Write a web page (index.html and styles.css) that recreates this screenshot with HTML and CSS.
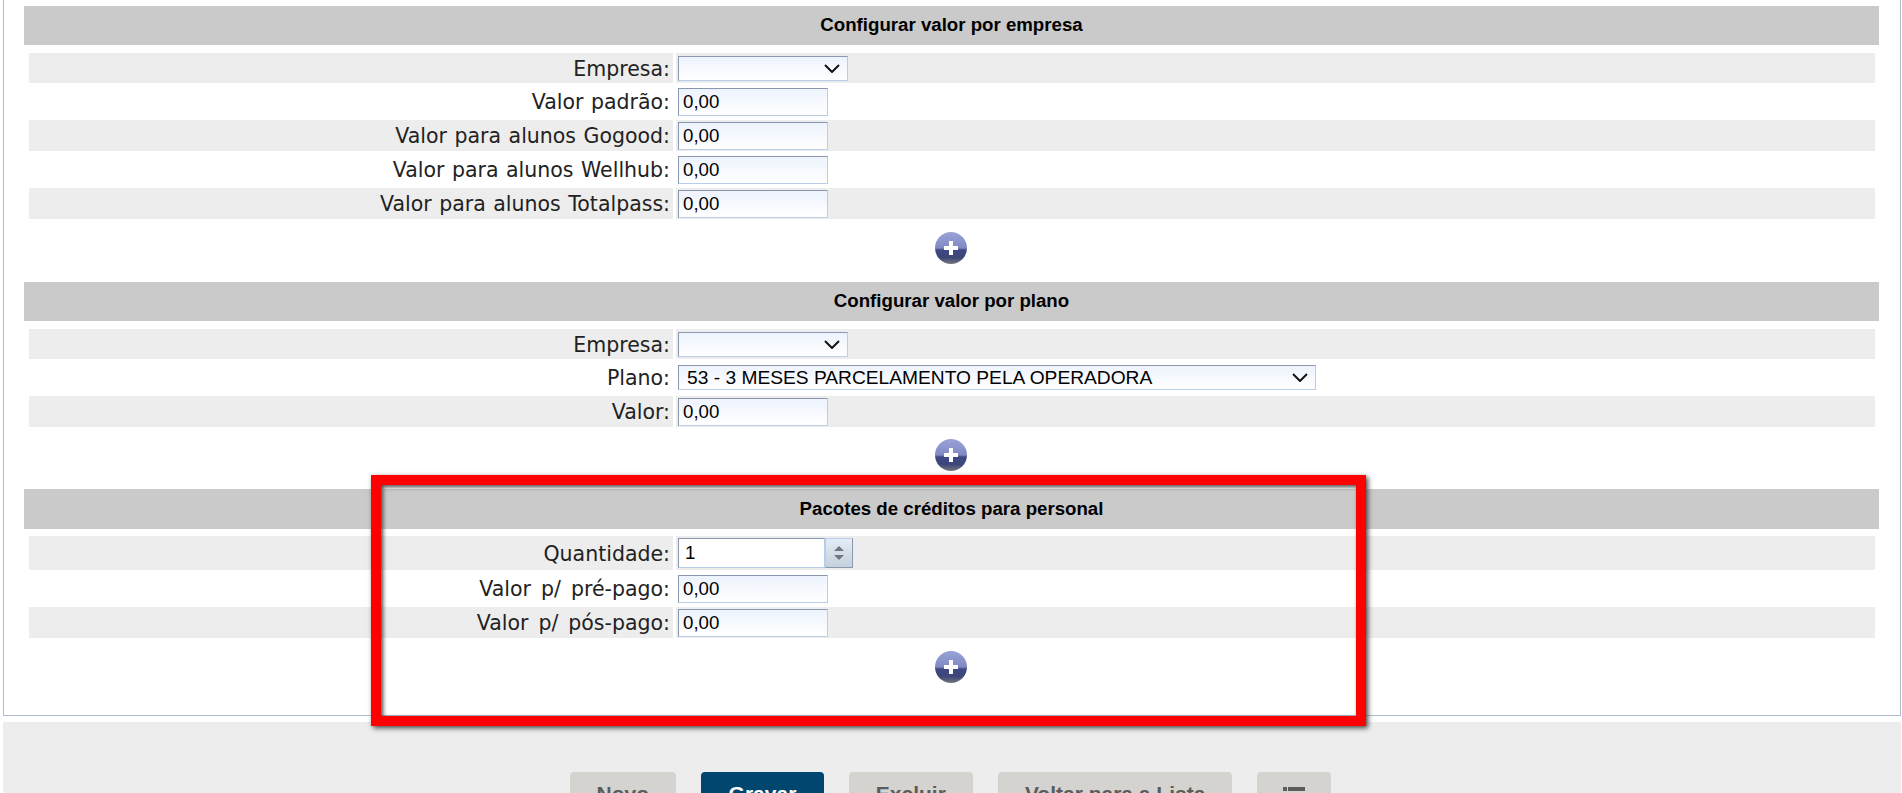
FILE: index.html
```html
<!doctype html>
<html lang="pt-BR">
<head>
    <meta charset="utf-8"/>
    <title>Cadastro de produto</title>
    <link rel="stylesheet" href="styles.css">
</head>

<body>
    <svg class="defs" width="0" height="0">
        <defs>
            <linearGradient id="addGrad" x1="0" y1="0" x2="0" y2="1">
                <stop offset="0" stop-color="#9aa3d8"/>
                <stop offset="0.5" stop-color="#8089c2"/>
                <stop offset="0.56" stop-color="#3e4884"/>
                <stop offset="0.8" stop-color="#3e4678"/>
                <stop offset="1" stop-color="#77777f"/>
            </linearGradient>
            <symbol id="add" viewBox="0 0 32 32">
                <circle cx="16" cy="16" r="16" fill="url(#addGrad)"/>
                <path d="M14 9h4v5h5v4h-5v5h-4v-5H9v-4h5z" fill="#fff"/>
            </symbol>
        </defs>
    </svg>

    <div class="panel">
        <!-- valor por empresa -->
        <div class="section">
            <h3 class="heading">Configurar valor por empresa</h3>
            <table class="form">
                <tr class="even short">
                    <td class="label">Empresa:</td>
                    <td class="field"><select class="combo"><option></option></select></td>
                </tr>
                <tr>
                    <td class="label">Valor padrão:</td>
                    <td class="field"><input class="money" type="text" value="0,00"/></td>
                </tr>
                <tr class="even">
                    <td class="label">Valor para alunos Gogood:</td>
                    <td class="field"><input class="money" type="text" value="0,00"/></td>
                </tr>
                <tr>
                    <td class="label">Valor para alunos Wellhub:</td>
                    <td class="field"><input class="money" type="text" value="0,00"/></td>
                </tr>
                <tr class="even">
                    <td class="label">Valor para alunos Totalpass:</td>
                    <td class="field"><input class="money" type="text" value="0,00"/></td>
                </tr>
            </table>
            <div class="add"><svg width="32" height="32"><use href="#add"/></svg></div>
        </div>

        <!-- valor por plano -->
        <div class="section">
            <h3 class="heading">Configurar valor por plano</h3>
            <table class="form">
                <tr class="even short">
                    <td class="label">Empresa:</td>
                    <td class="field"><select class="combo"><option></option></select></td>
                </tr>
                <tr>
                    <td class="label">Plano:</td>
                    <td class="field">
                        <select class="combo wide"><option>53 - 3 MESES PARCELAMENTO PELA OPERADORA</option></select>
                    </td>
                </tr>
                <tr class="even">
                    <td class="label">Valor:</td>
                    <td class="field"><input class="money" type="text" value="0,00"/></td>
                </tr>
            </table>
            <div class="add tight"><svg width="32" height="32"><use href="#add"/></svg></div>
        </div>

        <!-- pacotes -->
        <div class="section">
            <h3 class="heading tall">Pacotes de créditos para personal</h3>
            <table class="form">
                <tr class="even high">
                    <td class="label">Quantidade:</td>
                    <td class="field">
                        <span class="spinner">
                            <input class="spin-input" type="text" value="1"/>
                            <span class="spin-btn">
                                <svg width="12" height="20" viewBox="0 0 12 20">
                                    <path d="M6 3l5 5H1z" fill="#6f7680"/>
                                    <path d="M6 17l5-5H1z" fill="#6f7680"/>
                                </svg>
                            </span>
                        </span>
                    </td>
                </tr>
                <tr>
                    <td class="label spaced">Valor p/ pré-pago:</td>
                    <td class="field"><input class="money" type="text" value="0,00"/></td>
                </tr>
                <tr class="even">
                    <td class="label spaced">Valor p/ pós-pago:</td>
                    <td class="field"><input class="money" type="text" value="0,00"/></td>
                </tr>
            </table>
            <div class="add"><svg width="32" height="32"><use href="#add"/></svg></div>
        </div>
    </div>

    <div class="footer">
        <a class="btn">Novo</a>
        <a class="btn primary">Gravar</a>
        <a class="btn">Excluir</a>
        <a class="btn">Voltar para a Lista</a>
        <a class="btn icon">
            <svg width="22" height="18" viewBox="0 0 22 18">
                <path d="M0 0h4v4H0zM5 0h17v4H5zM0 6h4v4H0zM5 6h17v4H5zM0 12h4v4H0zM5 12h17v4H5z" fill="#5c5c5c"/>
            </svg>
        </a>
    </div>

    <div class="mark"></div>
</body>
</html>
```

FILE: styles.css
```css
* {
    box-sizing: border-box;
}

html, body {
    margin: 0;
    padding: 0;
    height: 793px;
    overflow: hidden;
    background: #fff;
}

body {
    position: relative;
    padding: 0 1px 0 3px;
}

.defs {
    position: absolute;
}

.panel {
    height: 716px;
    padding: 6px 21px 0 20px;
    border: 1px solid #aebccb;
    border-top: 0;
}

.section {
    margin-bottom: 18px;
}

.heading {
    margin: 0 0 5px;
    height: 39px;
    background: #cacaca;
    color: #000;
    font: bold 18.67px/37px "Liberation Sans", Arial, sans-serif;
    text-align: center;
}

.heading.tall {
    height: 40px;
    line-height: 39px;
    margin-bottom: 4px;
}

.form {
    width: 100%;
    border-collapse: separate;
    border-spacing: 3px;
    padding: 0 1px 0 2px;
    margin: 0;
}

.form td {
    height: 31px;
    padding: 0;
}

.form tr.short td {
    height: 30px;
}

.form tr.high td {
    height: 34px;
}

.form tr.even td {
    background: #ededed;
}

.label {
    width: 644px;
    padding-right: 3px !important;
    text-align: right;
    color: #222;
    font: 20.5px "DejaVu Sans", Tahoma, sans-serif;
    word-spacing: 1px;
    vertical-align: middle;
}

.label.spaced {
    word-spacing: 3.5px;
}

.form tr.short .label,
.form tr.high .label {
    padding-top: 2px;
}

.field {
    padding-left: 2px !important;
    vertical-align: middle;
    line-height: 0;
}

.combo,
.money,
.spin-input {
    border: 1px solid;
    border-color: #8a97ae #b8cde8 #b8cde8 #8a97ae;
    border-radius: 0;
    outline: 0;
    margin: 0;
    color: #000;
    font-family: "Liberation Sans", Arial, sans-serif;
    background: linear-gradient(#edf3fd, #fff);
}

.combo {
    appearance: none;
    width: 170px;
    height: 25px;
    padding-left: 8px;
    font-size: 19.2px;
    background: url("data:image/svg+xml,%3Csvg xmlns='http://www.w3.org/2000/svg' width='16' height='9'%3E%3Cpath d='M1 1l7 7 7-7' fill='none' stroke='%23111' stroke-width='2'/%3E%3C/svg%3E") no-repeat right 7px center, linear-gradient(#edf3fd, #fff);
}

.combo.wide {
    width: 638px;
}

.money {
    width: 150px;
    height: 28px;
    padding: 0 4px;
    font-size: 18.67px;
    vertical-align: top;
}

.spinner {
    display: inline-flex;
    width: 175px;
    height: 30px;
    vertical-align: top;
}

.spin-input {
    width: 147px;
    height: 30px;
    padding: 0 6px;
    font-size: 18.67px;
    background: #fff;
}

.spin-btn {
    display: flex;
    align-items: center;
    justify-content: center;
    width: 28px;
    height: 30px;
    border: 1px solid #b8cde8;
    border-right-color: #8a97ae;
    border-bottom-color: #8a97ae;
    background: linear-gradient(#e4edf7, #c4d0dc);
}

.add {
    display: flex;
    justify-content: center;
    margin-top: 10px;
    padding-right: 2px;
    height: 32px;
}

.add.tight {
    margin-top: 9px;
}

.footer {
    display: flex;
    justify-content: center;
    gap: 25px;
    height: 71px;
    margin-top: 6px;
    padding-top: 50px;
    padding-right: 3px;
    background: #ededed;
}

.btn {
    display: block;
    flex: none;
    height: 44px;
    padding: 0 27px;
    border-radius: 4px;
    background: #d5d3d0;
    color: #5c5c5c;
    font: bold 21px/44px "Liberation Sans", Arial, sans-serif;
}

.btn.primary {
    padding: 0 27.5px;
    background: #00466f;
    color: #fff;
}

.btn.icon {
    width: 74px;
    padding: 15px 0 0 26px;
}

.btn.icon svg {
    display: block;
}

.mark {
    position: absolute;
    left: 371px;
    top: 475px;
    width: 995px;
    height: 251px;
    border: 10px solid #f00;
    box-shadow: 2px 2px 5px #444, inset 2px 2px 4px #444;
}
```
